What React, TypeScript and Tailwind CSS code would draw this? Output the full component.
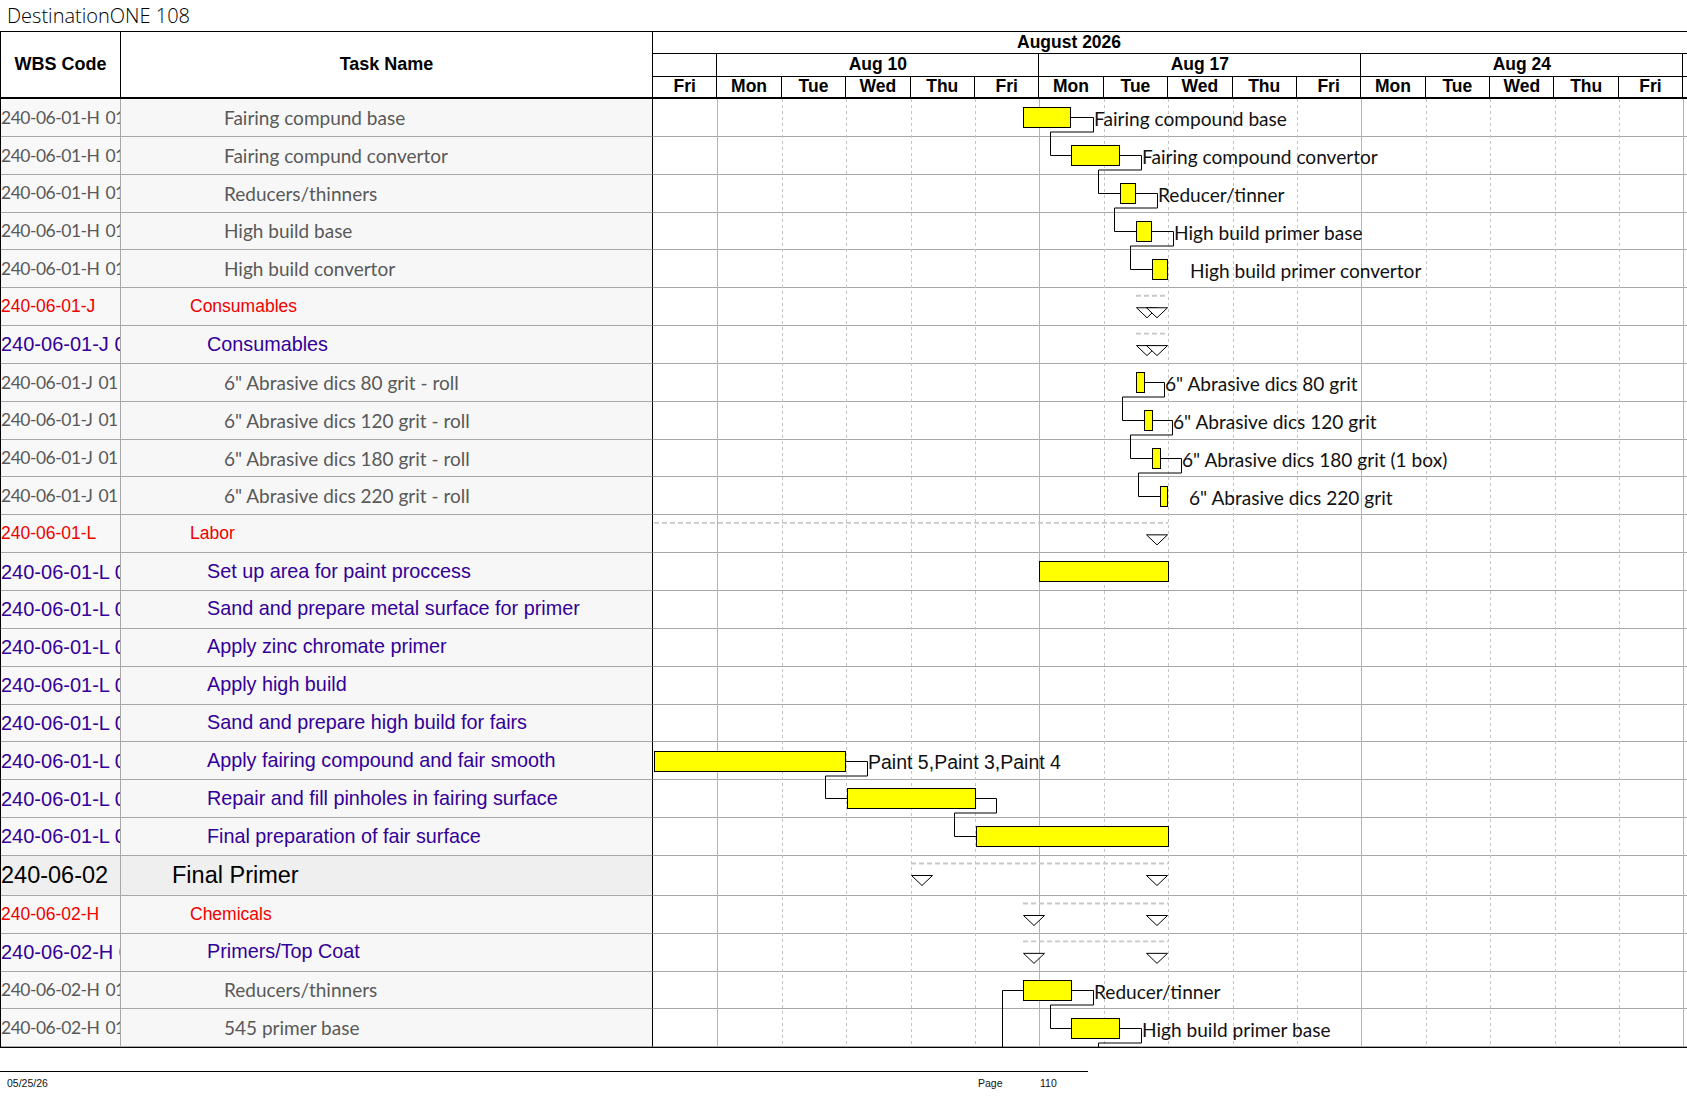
import React from "react";

type Kind = "leaf" | "red" | "purple" | "final";

const rows: { kind: Kind; wbs: string; name: string }[] = [
  { kind: "leaf", wbs: "240-06-01-H 01", name: "Fairing compund base" },
  { kind: "leaf", wbs: "240-06-01-H 01", name: "Fairing compund convertor" },
  { kind: "leaf", wbs: "240-06-01-H 01", name: "Reducers/thinners" },
  { kind: "leaf", wbs: "240-06-01-H 01", name: "High build base" },
  { kind: "leaf", wbs: "240-06-01-H 01", name: "High build convertor" },
  { kind: "red", wbs: "240-06-01-J", name: "Consumables" },
  { kind: "purple", wbs: "240-06-01-J 01", name: "Consumables" },
  { kind: "leaf", wbs: "240-06-01-J 01", name: '6" Abrasive dics 80 grit - roll' },
  { kind: "leaf", wbs: "240-06-01-J 01", name: '6" Abrasive dics 120 grit - roll' },
  { kind: "leaf", wbs: "240-06-01-J 01", name: '6" Abrasive dics 180 grit - roll' },
  { kind: "leaf", wbs: "240-06-01-J 01", name: '6" Abrasive dics 220 grit - roll' },
  { kind: "red", wbs: "240-06-01-L", name: "Labor" },
  { kind: "purple", wbs: "240-06-01-L 01", name: "Set up area for paint proccess" },
  { kind: "purple", wbs: "240-06-01-L 01", name: "Sand and prepare metal surface for primer" },
  { kind: "purple", wbs: "240-06-01-L 01", name: "Apply zinc chromate primer" },
  { kind: "purple", wbs: "240-06-01-L 01", name: "Apply high build" },
  { kind: "purple", wbs: "240-06-01-L 01", name: "Sand and prepare high build for fairs" },
  { kind: "purple", wbs: "240-06-01-L 01", name: "Apply fairing compound and fair smooth" },
  { kind: "purple", wbs: "240-06-01-L 01", name: "Repair and fill pinholes in fairing surface" },
  { kind: "purple", wbs: "240-06-01-L 01", name: "Final preparation of fair surface" },
  { kind: "final", wbs: "240-06-02", name: "Final Primer" },
  { kind: "red", wbs: "240-06-02-H", name: "Chemicals" },
  { kind: "purple", wbs: "240-06-02-H 01", name: "Primers/Top Coat" },
  { kind: "leaf", wbs: "240-06-02-H 01", name: "Reducers/thinners" },
  { kind: "leaf", wbs: "240-06-02-H 01", name: "545 primer base" },
];

const wbsCls: Record<Kind, string> = {
  leaf: "font-['Lato',sans-serif] text-[17.5px] tracking-[-0.5px] [word-spacing:2px] text-[#595959]",
  red: "text-[17.5px] text-[#f00000]",
  purple: "text-[20px] text-[#330099]",
  final: "text-[23.5px] text-black",
};

const nameCls: Record<Kind, string> = {
  leaf: "pl-[103px] font-['Lato',sans-serif] text-[19px] text-[#595959]",
  red: "pl-[69px] text-[17.5px] text-[#f00000]",
  purple: "pl-[86px] text-[19.8px] text-[#330099]",
  final: "pl-[51px] text-[23.5px] text-black",
};

const days = ["Fri", "Mon", "Tue", "Wed", "Thu", "Fri", "Mon", "Tue", "Wed", "Thu", "Fri", "Mon", "Tue", "Wed", "Thu", "Fri"];

// page coordinates of the chart
const G = 653;
const TOP = 99;
const ROW = 37.85;
const rowTop = (i: number) => (i <= 20 ? TOP + i * ROW : TOP + 20 * ROW + 40 + (i - 21) * ROW);
const mid = (i: number) => (i === 20 ? rowTop(20) + 20 : rowTop(i) + ROW / 2) - 0.8;

const bars = [
  { row: 0, x1: 1022, x2: 1069 },
  { row: 1, x1: 1070, x2: 1118 },
  { row: 2, x1: 1119, x2: 1134 },
  { row: 3, x1: 1135, x2: 1150 },
  { row: 4, x1: 1151, x2: 1166 },
  { row: 7, x1: 1135, x2: 1143 },
  { row: 8, x1: 1143, x2: 1151 },
  { row: 9, x1: 1151, x2: 1159 },
  { row: 10, x1: 1159, x2: 1166 },
  { row: 12, x1: 1038, x2: 1167 },
  { row: 17, x1: 653, x2: 844 },
  { row: 18, x1: 846, x2: 974 },
  { row: 19, x1: 975, x2: 1167 },
  { row: 23, x1: 1022, x2: 1070 },
  { row: 24, x1: 1070, x2: 1118 },
];

// finish-to-start links: bar end -> out -> down -> back -> down -> into next bar
const links = [
  { row: 0, x2: 1069, xa: 1092, xv: 1049, to: 1070 },
  { row: 1, x2: 1118, xa: 1140, xv: 1097, to: 1119 },
  { row: 2, x2: 1134, xa: 1156, xv: 1113, to: 1135 },
  { row: 3, x2: 1150, xa: 1172, xv: 1129, to: 1151 },
  { row: 7, x2: 1143, xa: 1163, xv: 1121, to: 1143 },
  { row: 8, x2: 1151, xa: 1171, xv: 1129, to: 1151 },
  { row: 9, x2: 1159, xa: 1180, xv: 1137, to: 1159 },
  { row: 17, x2: 844, xa: 866, xv: 824, to: 846 },
  { row: 18, x2: 974, xa: 995, xv: 953, to: 975 },
  { row: 23, x2: 1070, xa: 1092, xv: 1049, to: 1070 },
];

const labels = [
  { row: 0, x: 1093, text: "Fairing compound base" },
  { row: 1, x: 1141, text: "Fairing compound convertor" },
  { row: 2, x: 1157, text: "Reducer/tinner" },
  { row: 3, x: 1173, text: "High build primer base" },
  { row: 4, x: 1189, text: "High build primer convertor" },
  { row: 7, x: 1164, text: '6" Abrasive dics 80 grit' },
  { row: 8, x: 1172, text: '6" Abrasive dics 120 grit' },
  { row: 9, x: 1181, text: '6" Abrasive dics 180 grit (1 box)' },
  { row: 10, x: 1188, text: '6" Abrasive dics 220 grit' },
  { row: 23, x: 1093, text: "Reducer/tinner" },
  { row: 24, x: 1141, text: "High build primer base" },
];

const summaries = [
  { row: 5, x1: 1135, x2: 1167, start: true },
  { row: 6, x1: 1135, x2: 1167, start: true },
  { row: 11, x1: 653, x2: 1167, start: false },
  { row: 20, x1: 910, x2: 1167, start: true },
  { row: 21, x1: 1022, x2: 1167, start: true },
  { row: 22, x1: 1022, x2: 1167, start: true },
];

function Tri({ x, y }: { x: number; y: number }) {
  return <polygon points={`${x},${y} ${x + 21},${y} ${x + 10.5},${y + 10}`} fill="white" stroke="black" strokeWidth={1} />;
}

function Chart() {
  return (
    <svg className="absolute left-[653px] top-0 h-full w-[1034px] overflow-hidden" width={1034} height={949}>
      <g transform={`translate(${-G} ${-TOP})`}>
        {/* day grid */}
        {Array.from({ length: 16 }, (_, k) => {
          const x = G + Math.round((k + 1) * 64.4) - 0.5;
          const week = (k + 1) % 5 === 1;
          return (
            <line
              key={k}
              x1={x}
              x2={x}
              y1={TOP}
              y2={TOP + 950}
              stroke={week ? "#b4b4b4" : "#c4c4c4"}
              strokeWidth={1}
              strokeDasharray={week ? undefined : "3 3"}
            />
          );
        })}

        {/* summary spans */}
        {summaries.map((s) => {
          const t = rowTop(s.row);
          return (
            <g key={s.row}>
              <line x1={s.x1} x2={s.x2} y1={t + 7.5} y2={t + 7.5} stroke="#c8c8c8" strokeWidth={1.8} strokeDasharray="5 3" />
              {s.start && <Tri x={s.x1 + 0.5} y={t + 19.5} />}
              <Tri x={s.x2 - 21.5} y={t + 19.5} />
            </g>
          );
        })}

        {/* links */}
        {links.map((l) => {
          const a = Math.round(mid(l.row)) + 0.5;
          const b = Math.round(mid(l.row + 1)) + 0.5;
          const d = a + 14.5;
          return (
            <polyline
              key={l.row}
              points={`${l.x2},${a} ${l.xa + 0.5},${a} ${l.xa + 0.5},${d} ${l.xv + 0.5},${d} ${l.xv + 0.5},${b} ${l.to},${b}`}
              fill="none"
              stroke="black"
              strokeWidth={1}
            />
          );
        })}
        <polyline
          points={`1118,${Math.round(mid(24)) + 0.5} 1140.5,${Math.round(mid(24)) + 0.5} 1140.5,${Math.round(mid(24)) + 15} 1097.5,${Math.round(mid(24)) + 15} 1097.5,1060`}
          fill="none"
          stroke="black"
        />
        <polyline points={`1001.5,1060 1001.5,${Math.round(mid(23)) + 0.5} 1022,${Math.round(mid(23)) + 0.5}`} fill="none" stroke="black" />

        {/* bars */}
        {bars.map((b) => {
          const y = Math.round(mid(b.row)) - 10 + 0.5;
          return <rect key={b.row} x={b.x1 + 0.5} y={y} width={b.x2 - b.x1} height={20} fill="#ffff00" stroke="black" strokeWidth={1} />;
        })}

        {/* labels */}
        {labels.map((l) => (
          <text key={l.row} x={l.x} y={mid(l.row) + 1.5} dominantBaseline="central" fontFamily="Lato, sans-serif" fontSize={19.1} fill="#111">
            {l.text}
          </text>
        ))}
        <text x={867} y={mid(17) + 1} dominantBaseline="central" fontFamily="'Liberation Sans', Arial, sans-serif" fontSize={19.5} fill="#111">
          Paint 5,Paint 3,Paint 4
        </text>
      </g>
    </svg>
  );
}

export default function App() {
  return (
    <div className="w-[1687px] h-[1097px] overflow-hidden bg-white font-['Liberation_Sans',Arial,sans-serif] text-black">
      {/* Title */}
      <div className="h-[31px] flex items-center pl-[7px] font-['Open_Sans',sans-serif] font-light text-[20px] text-black leading-none">
        DestinationONE 108
      </div>

      {/* Table */}
      <div className="border-l border-black">
        {/* Header */}
        <div className="flex h-[68px] border-t border-b-2 border-black">
          <div className="w-[120px] shrink-0 border-r border-black flex items-center justify-center font-bold text-[18px]">WBS Code</div>
          <div className="w-[532px] shrink-0 border-r border-black flex items-center justify-center font-bold text-[18px]">Task Name</div>
          <div className="flex-1 flex flex-col font-bold text-[17.5px] leading-none">
            <div className="h-[22px] shrink-0 border-b border-black flex items-center pl-[364px]">August 2026</div>
            <div className="h-[23px] shrink-0 border-b border-black flex">
              <div className="w-[64.4px] shrink-0 border-r border-black" />
              {["Aug 10", "Aug 17", "Aug 24"].map((w) => (
                <div key={w} className="w-[322px] shrink-0 border-r border-black flex items-center justify-center">
                  {w}
                </div>
              ))}
            </div>
            <div className="h-[20px] shrink-0 flex">
              {days.map((d, i) => (
                <div key={i} className="w-[64.4px] shrink-0 border-r border-black flex items-center justify-center">
                  {d}
                </div>
              ))}
            </div>
          </div>
        </div>

        {/* Body */}
        <div className="relative border-b border-black">
          {rows.map((r, i) => {
            const final = r.kind === "final";
            return (
              <div key={i} className={`flex ${final ? "h-[40px]" : "h-[37.85px]"}`}>
                <div
                  className={`w-[120px] shrink-0 border-r border-b border-[#a8a8a8] ${final ? "bg-[#efefef]" : "bg-[#f8f8f8]"} overflow-hidden whitespace-nowrap flex items-center leading-none ${wbsCls[r.kind]}`}
                >
                  {r.wbs}
                </div>
                <div
                  className={`w-[532px] shrink-0 border-r border-r-black border-b border-b-[#a8a8a8] ${final ? "bg-[#efefef]" : "bg-[#f7f7f7]"} overflow-hidden whitespace-nowrap flex items-center leading-none ${nameCls[r.kind]}`}
                >
                  {r.name}
                </div>
                <div className="flex-1 border-b border-[#a8a8a8]" />
              </div>
            );
          })}
          <Chart />
        </div>
      </div>

      {/* Footer */}
      <div className="mt-[23px] w-[1088px] border-t border-black pt-[6px] flex text-[10.5px] leading-none text-[#111]">
        <span className="w-[978px] pl-[7px]">05/25/26</span>
        <span className="w-[62px]">Page</span>
        <span>110</span>
      </div>
    </div>
  );
}
